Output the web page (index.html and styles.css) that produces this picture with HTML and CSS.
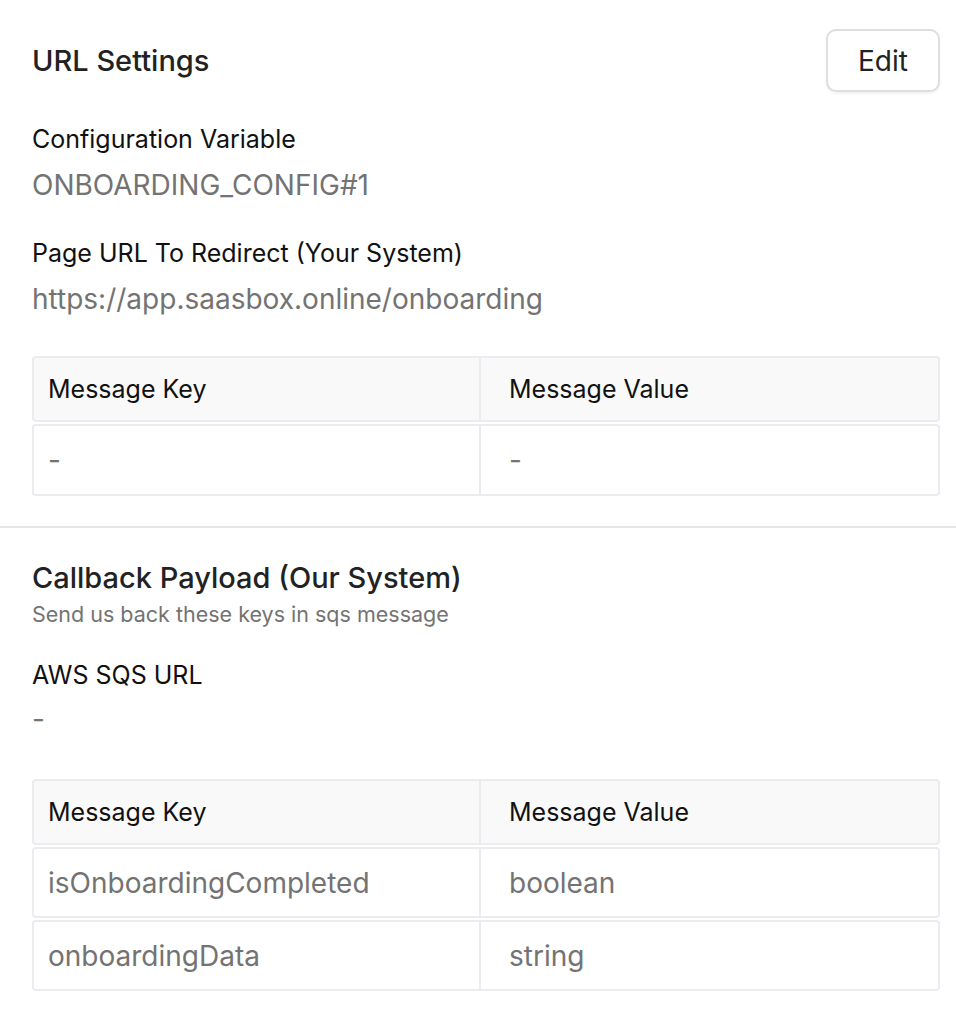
FILE: index.html
```html
<!DOCTYPE html>
<html>
<head>
<meta charset="utf-8">
<link rel="stylesheet" href="styles.css">
</head>
<body>
<div class="page">
  <section class="section">
    <div class="head">
      <h2 class="title">URL Settings</h2>
      <button class="btn">Edit</button>
    </div>
    <div class="field">
      <div class="label">Configuration Variable</div>
      <div class="value">ONBOARDING_CONFIG#1</div>
    </div>
    <div class="field">
      <div class="label">Page URL To Redirect (Your System)</div>
      <div class="value">https://app.saasbox.online/onboarding</div>
    </div>
    <div class="table t1">
      <div class="row hdr"><div class="cell c1">Message Key</div><div class="cell c2">Message Value</div></div>
      <div class="row"><div class="cell c1">-</div><div class="cell c2">-</div></div>
    </div>
  </section>
  <hr class="divider">
  <section class="section s2">
    <h2 class="title">Callback Payload (Our System)</h2>
    <div class="sub">Send us back these keys in sqs message</div>
    <div class="field f2">
      <div class="label">AWS SQS URL</div>
      <div class="value v2">-</div>
    </div>
    <div class="table t2tab">
      <div class="row hdr"><div class="cell c1">Message Key</div><div class="cell c2">Message Value</div></div>
      <div class="row"><div class="cell c1">isOnboardingCompleted</div><div class="cell c2">boolean</div></div>
      <div class="row"><div class="cell c1">onboardingData</div><div class="cell c2">string</div></div>
    </div>
  </section>
</div>
</body>
</html>
```
FILE: styles.css
```css
* { box-sizing: border-box; }
html, body { margin: 0; padding: 0; background: #fff; }
body { font-family: Inter, "Noto Sans", sans-serif; color: #111; }
.page { width: 956px; }
.section { padding: 0 16px 0 32px; }
.head { display: flex; justify-content: space-between; align-items: center; padding-top: 29px; }
.title { margin: 0; font-size: 29px; font-weight: 500; color: #222; line-height: 36px; }
.btn {
  width: 114px; height: 63px; border: 2px solid #dedee2; border-radius: 10px; background: #fff;
  font-family: inherit; font-size: 28px; color: #222; box-shadow: 0 2px 3px rgba(0,0,0,0.05);
  padding: 0;
}
.field { margin-top: 31px; }
.field + .field { margin-top: 34px; }
.label { font-size: 25px; line-height: 32px; color: #111; }
.value { font-size: 28px; line-height: 36px; color: #737373; margin-top: 12px; }
.table { margin-top: 39px; display: flex; flex-direction: column; gap: 2px; }
.row { display: grid; grid-template-columns: 447px 1fr; border: 2px solid #ececf0; border-radius: 4px; height: 72px; }
.t2tab .row { height: 71px; }
.row.hdr { background: #f9f9f9; height: 66px; }
.cell { display: flex; align-items: center; font-size: 28px; color: #737373; }
.hdr .cell { color: #111; font-size: 25px; }
.c1 { padding-left: 14px; border-right: 2px solid #ececf0; }
.c2 { padding-left: 28px; }
.divider { margin: 30px 0 0 0; border: 0; border-top: 2px solid #e6e6ea; height: 0; }
.s2 { padding-top: 32px; }
.sub { font-size: 21.5px; color: #737373; line-height: 28px; margin-top: 4px; }
.f2 { margin-top: 31px; }
.v2 { margin-top: 10px; }
.t2tab { margin-top: 42px; }
```
